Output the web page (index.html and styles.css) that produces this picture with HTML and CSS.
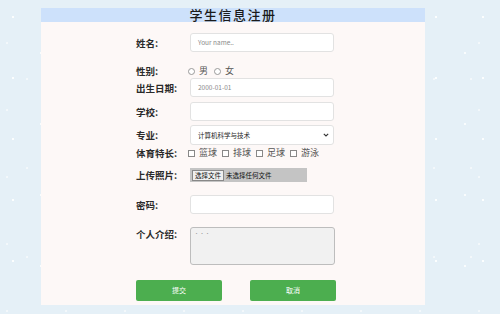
FILE: index.html
```html
<!DOCTYPE html>
<html lang="zh">
<head>
<meta charset="utf-8">
<link rel="stylesheet" href="styles.css">
</head>
<body>
<div class="panel">
  <div class="head">学生信息注册</div>
  <form class="form">
    <div class="row r1"><span class="lab">姓名:</span><div class="inp ph">Your name..</div></div>
    <div class="row r2"><span class="lab">性别:</span>
      <div class="opts rds"><span class="radio"></span><span class="opt">男</span><span class="radio"></span><span class="opt">女</span></div>
    </div>
    <div class="row r3"><span class="lab">出生日期:</span><div class="inp ph">2000-01-01</div></div>
    <div class="row r4"><span class="lab">学校:</span><div class="inp"></div></div>
    <div class="row r5"><span class="lab">专业:</span>
      <div class="inp sel"><span>计算机科学与技术</span>
        <svg class="chev" width="6" height="4" viewBox="0 0 6 4"><path d="M0.8 0.8 L3 3 L5.2 0.8" fill="none" stroke="#333" stroke-width="1.1"/></svg>
      </div>
    </div>
    <div class="row r6"><span class="lab">体育特长:</span>
      <div class="opts cks"><span class="ck"></span><span class="opt">篮球</span><span class="ck"></span><span class="opt">排球</span><span class="ck"></span><span class="opt">足球</span><span class="ck"></span><span class="opt">游泳</span></div>
    </div>
    <div class="row r7"><span class="lab">上传照片:</span>
      <div class="file"><span class="fbtn">选择文件</span><span class="ftxt">未选择任何文件</span></div>
    </div>
    <div class="row r8"><span class="lab">密码:</span><div class="inp"></div></div>
    <div class="row r9"><span class="lab">个人介绍:</span><div class="ta">···</div></div>
    <div class="btns"><span class="btn">提交</span><span class="btn">取消</span></div>
  </form>
</div>
</body>
</html>
```
FILE: styles.css
```css
html, body { margin: 0; padding: 0; }
body {
  width: 500px;
  height: 314px;
  overflow: hidden;
  background-color: #e5f0f7;
  background-image:
    radial-gradient(circle at 13px 17px, rgba(255,255,255,0.9) 0.8px, transparent 1.3px),
    radial-gradient(circle at 41px 53px, rgba(255,255,255,0.8) 0.7px, transparent 1.2px),
    radial-gradient(circle at 27px 79px, rgba(255,255,255,0.7) 0.6px, transparent 1.1px),
    radial-gradient(circle at 7px 43px, rgba(255,255,255,0.7) 0.6px, transparent 1.1px);
  background-size: 47px 61px, 53px 71px, 37px 89px, 59px 67px;
  font-family: "Noto Sans CJK SC", "DejaVu Serif", serif;
  padding-top: 8px;
  box-sizing: border-box;
}
.panel {
  margin-left: 41px;
  width: 384px;
  height: 297px;
  background: #fdf8f7;
}
.head {
  height: 14px;
  line-height: 14px;
  background: #cde1fb;
  text-align: center;
  font-size: 13px;
  font-weight: 500;
  letter-spacing: 1.5px;
  color: #1a1a1a;
}
.form {
  display: flex;
  flex-direction: column;
  padding-left: 95px;
  margin: 0;
}
.row { display: flex; align-items: center; }
.lab {
  width: 54px;
  flex: none;
  font-size: 9.5px;
  font-weight: 700;
  color: #2a2a2a;
  line-height: 12px;
}
.inp {
  width: 144px;
  height: 19px;
  box-sizing: border-box;
  background: #fff;
  border: 1px solid #e2e2e2;
  border-radius: 3px;
  font-size: 6.5px;
  line-height: 17px;
  padding-left: 7px;
  color: #222;
}
.ph { color: #8a8a8a; }
.r1 { margin-top: 11px; }
.r2 { margin-top: 12px; height: 14px; }
.r3 { margin-top: 0; }
.r4 { margin-top: 5px; }
.r5 { margin-top: 4px; }
.r5 .inp { height: 20px; display: flex; align-items: center; justify-content: space-between; padding-right: 4px; line-height: normal; }
.r6 { margin-top: 1px; height: 14px; }
.r7 { margin-top: 8px; height: 14px; }
.r8 { margin-top: 13px; }
.r9 { margin-top: 13px; align-items: flex-start; }
.r9 .lab { margin-top: 1px; }
.opts {
  display: flex;
  align-items: center;
  margin-left: -2px;
}
.radio {
  width: 5px; height: 5px;
  border: 1px solid #999;
  border-radius: 50%;
  background: #fff;
  margin-right: 4px;
}
.ck {
  width: 5px; height: 5px;
  border: 1px solid #888;
  background: #fff;
  margin-right: 4px;
}
.opt {
  font-size: 9px;
  color: #555;
  margin-right: 4px;
  line-height: 12px;
}
.rds .opt { margin-right: 6px; }
.cks .opt { margin-right: 5px; }
.file {
  width: 117px;
  height: 14px;
  box-sizing: border-box;
  background: #c4c4c4;
  display: flex;
  align-items: center;
  padding-left: 2px;
  font-size: 6.5px;
  color: #111;
}
.fbtn {
  border: 1px solid #888;
  background: #efefef;
  padding: 0 2px;
  line-height: 9px;
  margin-right: 2px;
}
.ta {
  width: 145px;
  height: 38px;
  box-sizing: border-box;
  background: #f1f1f1;
  border: 1px solid #bdbdbd;
  border-radius: 3px;
  font-size: 5px;
  color: #999;
  padding-left: 3px;
  padding-top: 1px;
  line-height: 7px;
  letter-spacing: 0.5px;
}
.btns {
  display: flex;
  gap: 28px;
  margin-top: 15px;
}
.btn {
  width: 86px;
  height: 21px;
  background: #4cae4f;
  border-radius: 2px;
  color: #fff;
  font-size: 7px;
  line-height: 21px;
  text-align: center;
}
```
